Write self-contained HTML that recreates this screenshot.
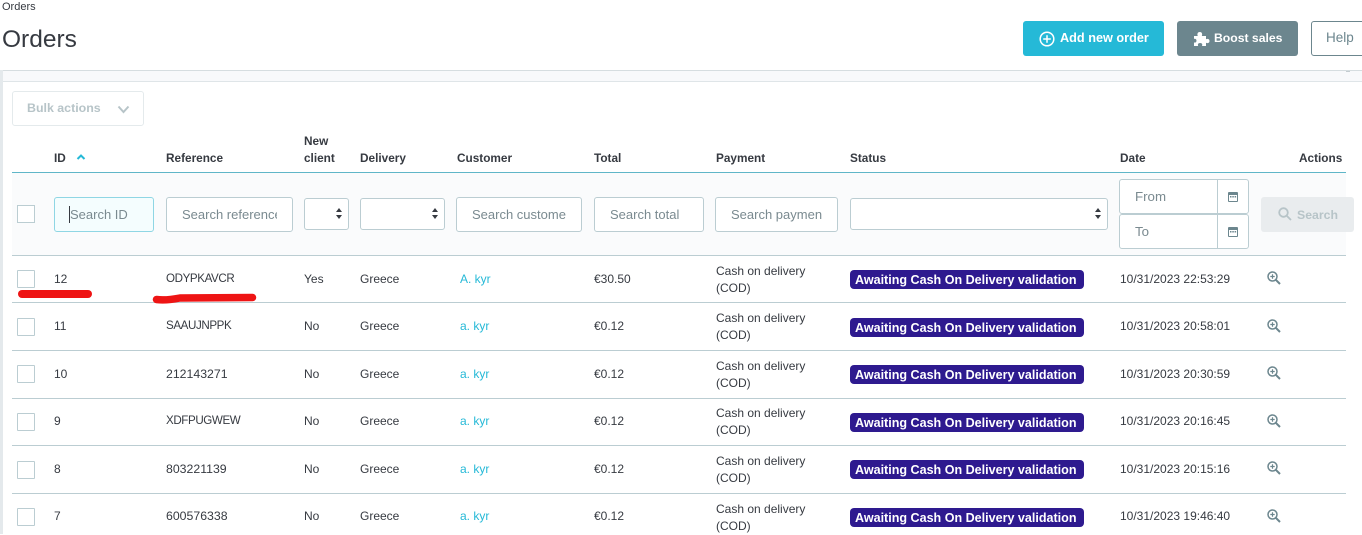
<!DOCTYPE html>
<html><head><meta charset="utf-8"><style>
html,body{margin:0;padding:0;background:#fff}
body{width:1362px;height:534px;position:relative;overflow:hidden;font-family:"Liberation Sans",sans-serif;color:#363a41;font-size:12px}
div,svg{position:absolute;box-sizing:border-box}
.t{white-space:nowrap;line-height:16px}
.h{font-weight:bold;font-size:11.8px;color:#363a41;top:150px;white-space:nowrap;line-height:16px}
.in{background:#fff;border:1px solid #bbcdd2;border-radius:3px;height:35px;top:197px;color:#7a8a90;font-size:13px;line-height:33px;padding:0 15px;white-space:nowrap}
.in span{display:block;overflow:hidden}
.sel{background:#fff;border:1px solid #bbcdd2;border-radius:3px;height:32px;top:198px}
.sel:after{content:"";position:absolute;right:6px;top:9px;border:3.5px solid transparent;border-bottom:4px solid #363a41;border-top:0}
.sel:before{content:"";position:absolute;right:6px;top:16px;border:3.5px solid transparent;border-top:4px solid #363a41;border-bottom:0}
.cb{left:17px;width:18px;height:18px;border:1px solid #bbcdd2;background:#fff;border-radius:1px}
.l{left:12px;width:1334px;height:1px;background:#bbcdd2}
.b{left:850px;width:234px;height:19px;background:#2e1a8f;border-radius:4px;color:#fff;font-weight:bold;font-size:12.55px;line-height:20px;padding-left:5px;white-space:nowrap}
.a{color:#25b9d7;left:460px}
.p{left:716px;line-height:17px;white-space:nowrap}
.r{left:166px;font-size:11.6px;letter-spacing:-.4px}
.d{left:166px;font-size:12.3px}
</style></head><body>
<div class="t" style="left:2px;top:-1px;font-size:11px">Orders</div>
<div class="t" style="left:2px;top:25px;font-size:24.5px;line-height:30px;color:#363a41">Orders</div>

<div style="left:1023px;top:21px;width:141px;height:35px;background:#25b9d7;border-radius:3px"></div>
<svg style="left:1039px;top:31px" width="16" height="16" viewBox="0 0 16 16" fill="none" stroke="#fff" stroke-width="1.5"><circle cx="8" cy="8" r="6.8"/><path d="M8 4.200v7.600M4.200 8h7.600"/></svg>
<div class="t" style="left:1060px;top:30px;color:#fff;font-weight:bold;font-size:12.7px">Add new order</div>
<div style="left:1177px;top:21px;width:121px;height:35px;background:#6c868e;border-radius:3px"></div>
<svg style="left:1193px;top:31px" width="17" height="16" viewBox="0 0 17 16" fill="#fff"><path d="M1 5h3.800C4 3.500 4.300 1 6.800 1S9.500 3.500 8.800 5H13v3.200c1.200-.7 3.500-.5 3.500 1.800S14.200 12.500 13 11.800V15H9c.6-1.400.3-3-1.900-3S4.600 13.600 5.200 15H1v-3.600c1.200.6 2.500-.2 2.500-1.700S2.200 7.400 1 8z"/></svg>
<div class="t" style="left:1214px;top:30px;color:#fff;font-weight:bold;font-size:12.2px">Boost sales</div>
<div style="left:1311px;top:21px;width:70px;height:35px;border:1px solid #6c868e;border-radius:3px;background:#fff"></div>
<div class="t" style="left:1326px;top:30px;color:#6c868e;font-size:13.5px">Help</div>

<div style="left:0;top:70px;width:1362px;height:12px;background:#f8f9fb;border-top:1px solid #d6dde0;border-bottom:1px solid #dfe5e8"></div>
<div style="left:1346px;top:71px;width:4px;height:1px;background:#c4ccd0"></div>
<div style="left:0;top:70px;width:3px;height:464px;background:#e4e9ec"></div>

<div style="left:12px;top:91px;width:132px;height:35px;border:1px solid #e4eaec;border-radius:3px;background:#fff"></div>
<div class="t" style="left:27px;top:100px;color:#b7c4c8;font-weight:bold;font-size:12.4px">Bulk actions</div>
<svg style="left:117px;top:105px" width="13" height="9" viewBox="0 0 13 9" fill="none" stroke="#b7c4c8" stroke-width="2"><path d="M1.500 1.500L6.500 7l5-5.500"/></svg>

<div class="h" style="left:54px">ID</div>
<svg style="left:76px;top:154px" width="10" height="6" viewBox="0 0 10 6" fill="none" stroke="#25b9d7" stroke-width="2"><path d="M1.500 5L5 1.500 8.500 5"/></svg>
<div class="h" style="left:166px">Reference</div>
<div class="h" style="left:304px;top:133px">New</div>
<div class="h" style="left:304px">client</div>
<div class="h" style="left:360px">Delivery</div>
<div class="h" style="left:457px">Customer</div>
<div class="h" style="left:594px">Total</div>
<div class="h" style="left:716px">Payment</div>
<div class="h" style="left:850px">Status</div>
<div class="h" style="left:1120px">Date</div>
<div class="h" style="left:1299px">Actions</div>

<div style="left:12px;top:172px;width:1334px;height:84px;background:#fafbfc;border-top:1px solid #5fb6c8"></div>
<div style="left:17px;top:205px;width:18px;height:18px;border:1px solid #bbcdd2;background:#fff"></div>
<div class="in" style="left:54px;width:100px;background:#f4fdfe;border-color:#8fd6e4"><span>Search ID</span></div>
<div style="left:69px;top:206px;width:1px;height:17px;background:#363a41"></div>
<div class="in" style="left:166px;width:127px"><span>Search reference</span></div>
<div class="sel" style="left:304px;width:45px"></div>
<div class="sel" style="left:360px;width:85px"></div>
<div class="in" style="left:456px;width:126px"><span>Search customer</span></div>
<div class="in" style="left:594px;width:110px"><span>Search total</span></div>
<div class="in" style="left:715px;width:123px"><span>Search payment</span></div>
<div class="sel" style="left:850px;width:258px"></div>

<div style="left:1119px;top:179px;width:130px;height:35px;border:1px solid #bbcdd2;border-radius:3px;background:#fff"></div>
<div style="left:1119px;top:214px;width:130px;height:35px;border:1px solid #bbcdd2;border-radius:3px;background:#fff"></div>
<div style="left:1217px;top:179px;width:1px;height:70px;background:#bbcdd2"></div>
<div class="t" style="left:1135px;top:189px;color:#7a8a90;font-size:13.3px">From</div>
<div class="t" style="left:1135px;top:224px;color:#7a8a90;font-size:13.3px">To</div>
<svg style="left:1228px;top:191px" width="10" height="11" viewBox="0 0 10 11"><path fill="#6c868e" d="M1 1h8a1 1 0 0 1 1 1v8a1 1 0 0 1-1 1H1a1 1 0 0 1-1-1V2a1 1 0 0 1 1-1z"/><path fill="#fff" d="M1 4h8v6H1z"/><path fill="#6c868e" d="M2 5h1.500v1.500H2zM4.300 5h1.500v1.500H4.300zM6.600 5h1.500v1.500H6.600z"/></svg>
<svg style="left:1228px;top:226px" width="10" height="11" viewBox="0 0 10 11"><path fill="#6c868e" d="M1 1h8a1 1 0 0 1 1 1v8a1 1 0 0 1-1 1H1a1 1 0 0 1-1-1V2a1 1 0 0 1 1-1z"/><path fill="#fff" d="M1 4h8v6H1z"/><path fill="#6c868e" d="M2 5h1.500v1.500H2zM4.300 5h1.500v1.500H4.300zM6.600 5h1.500v1.500H6.600z"/></svg>
<div style="left:1261px;top:197px;width:93px;height:35px;background:#e9ecee;border-radius:3px"></div>
<svg style="left:1278px;top:207px" width="14" height="14" viewBox="0 0 14 14" fill="none" stroke="#b7c4c8" stroke-width="1.800"><circle cx="5.500" cy="5.500" r="4.300"/><path d="M8.700 8.700L13 13"/></svg>
<div class="t" style="left:1297px;top:207px;color:#b7c4c8;font-weight:bold;font-size:12.3px">Search</div>

<div class="l" style="top:255px"></div>
<div class="l" style="top:302px"></div>
<div class="l" style="top:350px"></div>
<div class="l" style="top:398px"></div>
<div class="l" style="top:445px"></div>
<div class="l" style="top:493px"></div>

<!-- row 12 -->
<div class="cb" style="top:270px"></div>
<div class="t" style="left:54px;top:271px">12</div>
<div class="t r" style="top:271px">ODYPKAVCR</div>
<div class="t" style="left:304px;top:271px">Yes</div>
<div class="t" style="left:360px;top:271px">Greece</div>
<div class="t a" style="top:271px">A. kyr</div>
<div class="t" style="left:594px;top:271px">€30.50</div>
<div class="p" style="top:263px">Cash on delivery<br>(COD)</div>
<div class="b" style="top:270px">Awaiting Cash On Delivery validation</div>
<div class="t" style="left:1120px;top:271px">10/31/2023 22:53:29</div>
<svg style="left:1267px;top:271px" width="14" height="14" viewBox="0 0 14 14" fill="none" stroke="#6c868e" stroke-width="1.500"><circle cx="5.500" cy="5.500" r="4.500"/><path d="M8.800 8.800L13 13" stroke-width="2"/><path d="M5.500 3.300v4.400M3.300 5.500h4.400" stroke-width="1.200"/></svg>

<!-- row 11 -->
<div class="cb" style="top:318px"></div>
<div class="t" style="left:54px;top:318px">11</div>
<div class="t r" style="top:318px">SAAUJNPPK</div>
<div class="t" style="left:304px;top:318px">No</div>
<div class="t" style="left:360px;top:318px">Greece</div>
<div class="t a" style="top:318px">a. kyr</div>
<div class="t" style="left:594px;top:318px">€0.12</div>
<div class="p" style="top:310px">Cash on delivery<br>(COD)</div>
<div class="b" style="top:318px">Awaiting Cash On Delivery validation</div>
<div class="t" style="left:1120px;top:318px">10/31/2023 20:58:01</div>
<svg style="left:1267px;top:319px" width="14" height="14" viewBox="0 0 14 14" fill="none" stroke="#6c868e" stroke-width="1.500"><circle cx="5.500" cy="5.500" r="4.500"/><path d="M8.800 8.800L13 13" stroke-width="2"/><path d="M5.500 3.300v4.400M3.300 5.500h4.400" stroke-width="1.200"/></svg>

<!-- row 10 -->
<div class="cb" style="top:365px"></div>
<div class="t" style="left:54px;top:366px">10</div>
<div class="t d" style="top:366px">212143271</div>
<div class="t" style="left:304px;top:366px">No</div>
<div class="t" style="left:360px;top:366px">Greece</div>
<div class="t a" style="top:366px">a. kyr</div>
<div class="t" style="left:594px;top:366px">€0.12</div>
<div class="p" style="top:358px">Cash on delivery<br>(COD)</div>
<div class="b" style="top:365px">Awaiting Cash On Delivery validation</div>
<div class="t" style="left:1120px;top:366px">10/31/2023 20:30:59</div>
<svg style="left:1267px;top:366px" width="14" height="14" viewBox="0 0 14 14" fill="none" stroke="#6c868e" stroke-width="1.500"><circle cx="5.500" cy="5.500" r="4.500"/><path d="M8.800 8.800L13 13" stroke-width="2"/><path d="M5.500 3.300v4.400M3.300 5.500h4.400" stroke-width="1.200"/></svg>

<!-- row 9 -->
<div class="cb" style="top:413px"></div>
<div class="t" style="left:54px;top:413px">9</div>
<div class="t r" style="top:413px">XDFPUGWEW</div>
<div class="t" style="left:304px;top:413px">No</div>
<div class="t" style="left:360px;top:413px">Greece</div>
<div class="t a" style="top:413px">a. kyr</div>
<div class="t" style="left:594px;top:413px">€0.12</div>
<div class="p" style="top:405px">Cash on delivery<br>(COD)</div>
<div class="b" style="top:413px">Awaiting Cash On Delivery validation</div>
<div class="t" style="left:1120px;top:413px">10/31/2023 20:16:45</div>
<svg style="left:1267px;top:414px" width="14" height="14" viewBox="0 0 14 14" fill="none" stroke="#6c868e" stroke-width="1.500"><circle cx="5.500" cy="5.500" r="4.500"/><path d="M8.800 8.800L13 13" stroke-width="2"/><path d="M5.500 3.300v4.400M3.300 5.500h4.400" stroke-width="1.200"/></svg>

<!-- row 8 -->
<div class="cb" style="top:461px"></div>
<div class="t" style="left:54px;top:461px">8</div>
<div class="t d" style="top:461px">803221139</div>
<div class="t" style="left:304px;top:461px">No</div>
<div class="t" style="left:360px;top:461px">Greece</div>
<div class="t a" style="top:461px">a. kyr</div>
<div class="t" style="left:594px;top:461px">€0.12</div>
<div class="p" style="top:453px">Cash on delivery<br>(COD)</div>
<div class="b" style="top:460px">Awaiting Cash On Delivery validation</div>
<div class="t" style="left:1120px;top:461px">10/31/2023 20:15:16</div>
<svg style="left:1267px;top:461px" width="14" height="14" viewBox="0 0 14 14" fill="none" stroke="#6c868e" stroke-width="1.500"><circle cx="5.500" cy="5.500" r="4.500"/><path d="M8.800 8.800L13 13" stroke-width="2"/><path d="M5.500 3.300v4.400M3.300 5.500h4.400" stroke-width="1.200"/></svg>

<!-- row 7 -->
<div class="cb" style="top:508px"></div>
<div class="t" style="left:54px;top:508px">7</div>
<div class="t d" style="top:508px">600576338</div>
<div class="t" style="left:304px;top:508px">No</div>
<div class="t" style="left:360px;top:508px">Greece</div>
<div class="t a" style="top:508px">a. kyr</div>
<div class="t" style="left:594px;top:508px">€0.12</div>
<div class="p" style="top:501px">Cash on delivery<br>(COD)</div>
<div class="b" style="top:508px">Awaiting Cash On Delivery validation</div>
<div class="t" style="left:1120px;top:508px">10/31/2023 19:46:40</div>
<svg style="left:1267px;top:509px" width="14" height="14" viewBox="0 0 14 14" fill="none" stroke="#6c868e" stroke-width="1.500"><circle cx="5.500" cy="5.500" r="4.500"/><path d="M8.800 8.800L13 13" stroke-width="2"/><path d="M5.500 3.300v4.400M3.300 5.500h4.400" stroke-width="1.200"/></svg>

<!-- red marks -->
<div style="left:18px;top:290px;width:74px;height:8px;background:#ee1414;border-radius:4px"></div>
<svg style="left:150px;top:290px" width="110" height="16" viewBox="0 0 110 16" fill="none"><path d="M6.500 9.500C14 10.500 22 9.500 30 8L102.500 7.500" stroke="#ee1414" stroke-width="7.500" stroke-linecap="round"/></svg>
</body></html>
